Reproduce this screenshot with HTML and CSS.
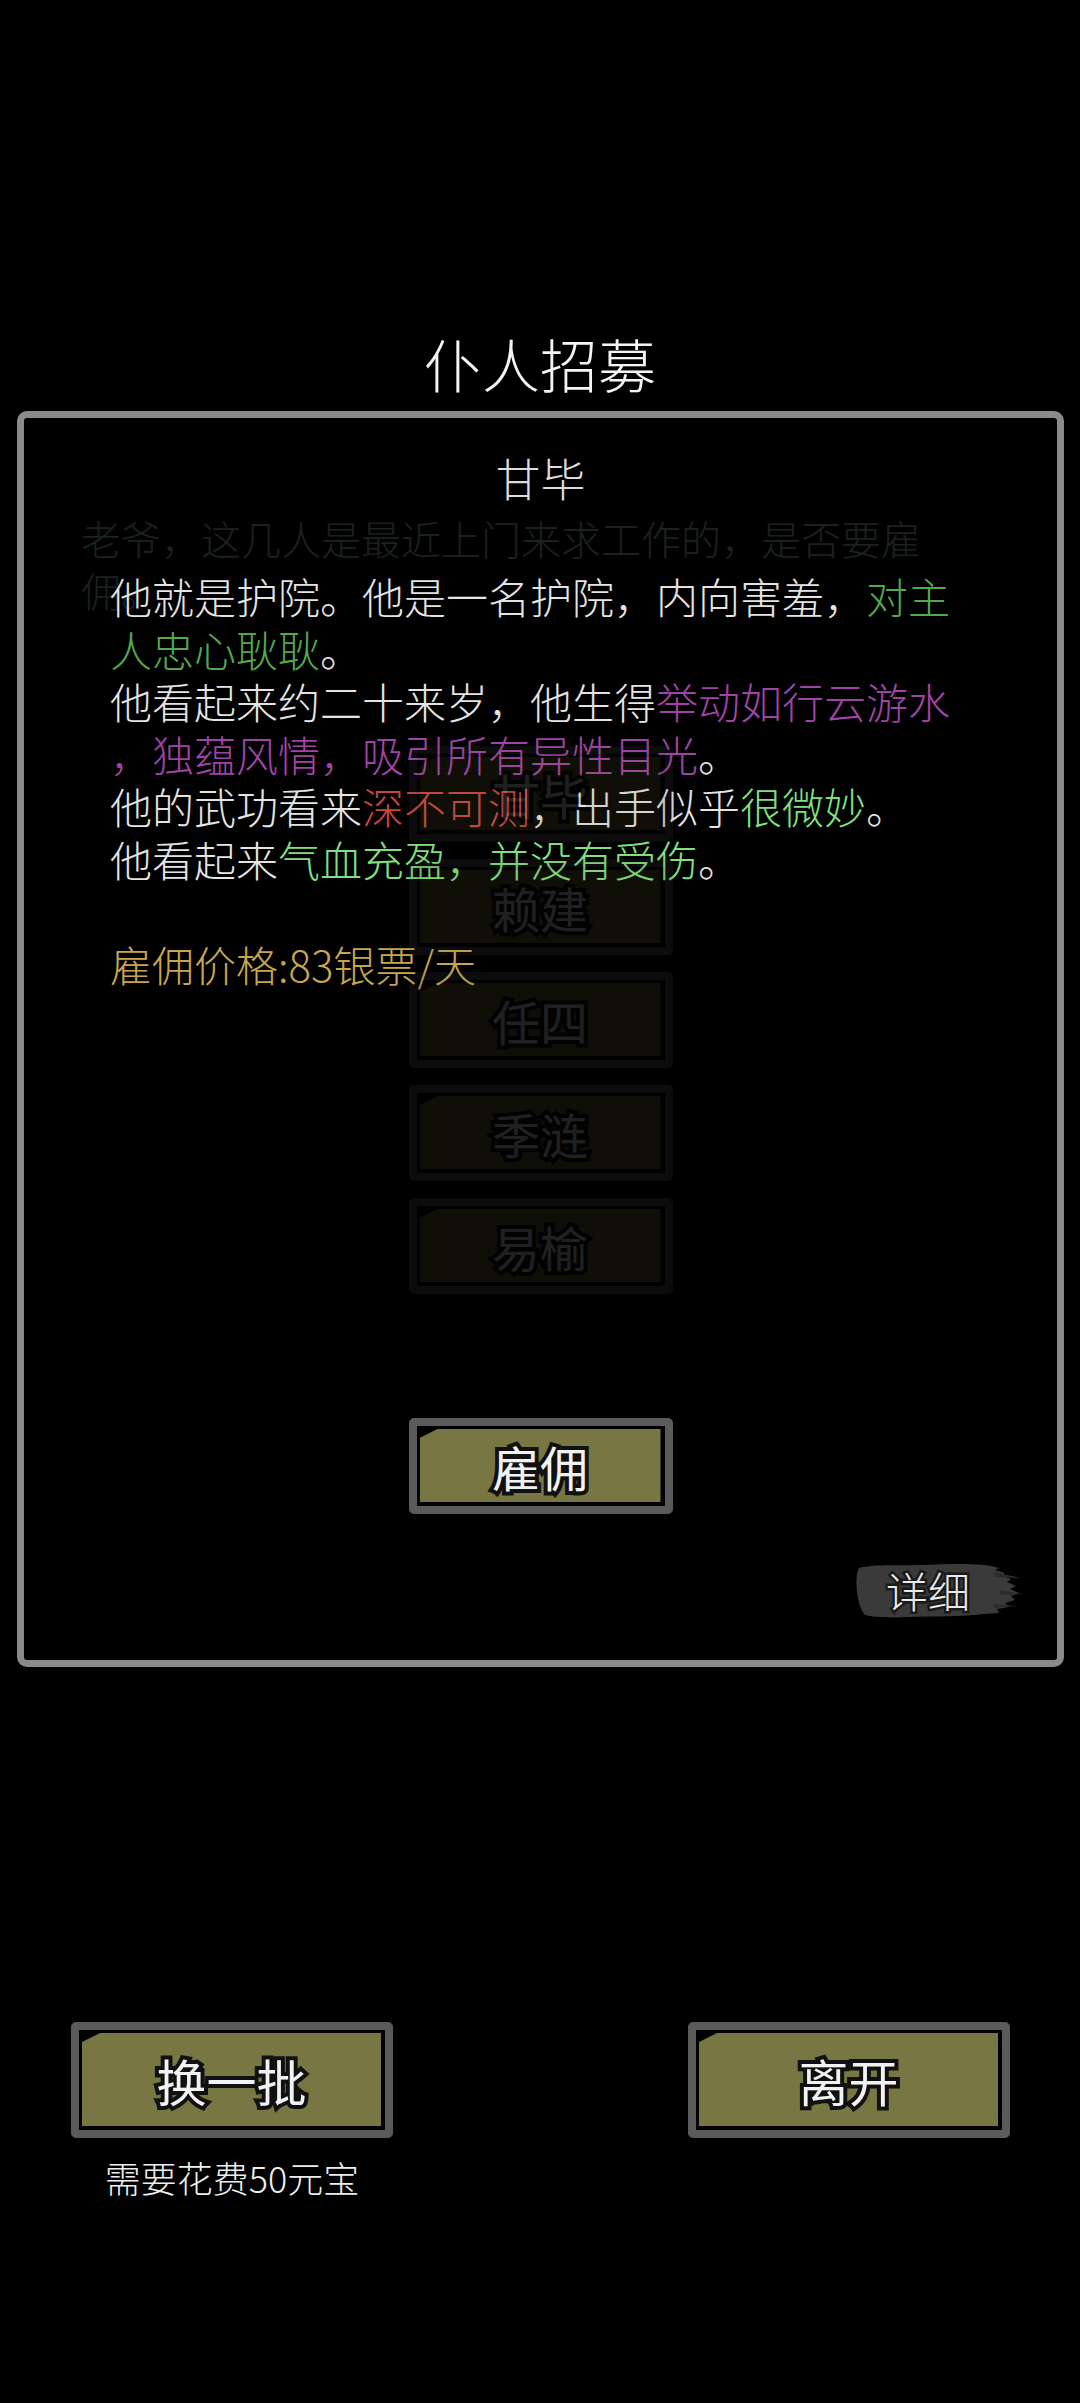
FILE: index.html
```html
<html>
<head>
<meta charset="utf-8">
<title>仆人招募</title>
<link rel="stylesheet" href="styles.css">
</head>
<body>
<div class="title">仆人招募</div>

<div class="panel">
  <!-- back layer: the list of candidates, dimmed -->
  <div class="layer back">
    <div class="prompt">
      <div class="line">老爷，这几人是最近上门来求工作的，是否要雇</div>
      <div class="line">佣。</div>
    </div>
    <div class="namelist">
      <div class="btn small faded"><div class="face">甘毕</div></div>
      <div class="btn small faded"><div class="face">赖建</div></div>
      <div class="btn small faded"><div class="face">任四</div></div>
      <div class="btn small faded"><div class="face">季涟</div></div>
      <div class="btn small faded"><div class="face">易榆</div></div>
    </div>
  </div>

  <!-- front layer: details of the picked one -->
  <div class="layer front">
    <div class="name">甘毕</div>
    <div class="desc">
      <div class="line">他就是护院。他是一名护院，内向害羞，<span class="green">对主</span></div>
      <div class="line"><span class="green">人忠心耿耿</span>。</div>
      <div class="line">他看起来约二十来岁，他生得<span class="purple">举动如行云游水</span></div>
      <div class="line"><span class="purple">，独蕴风情，吸引所有异性目光</span>。</div>
      <div class="line">他的武功看来<span class="red">深不可测</span>，出手似乎<span class="lime">很微妙</span>。</div>
      <div class="line">他看起来<span class="lime">气血充盈，并没有受伤</span>。</div>
      <div class="line">&nbsp;</div>
      <div class="line gold">雇佣价格:83银票/天</div>
    </div>
    <div class="btn small hire"><div class="face">雇佣</div></div>
    <div class="detail">
      <svg class="brush" width="170" height="62" viewBox="0 0 170 62">
        <path fill="#3a3a3a" d="M6 8 C20 4 45 6 70 5 C95 4 120 3 138 6 L146 8 L142 10 L152 13 L149 16 L158 19 L154 22 L163 26 L157 29 L166 33 L158 36 L162 40 L152 43 L156 47 L144 49 L146 53 L130 54 C110 57 80 56 55 57 C35 58 20 57 12 55 C8 50 5 42 4 32 C3 22 3 14 6 8 Z"/>
        <path fill="#2c2c2c" d="M140 12 L168 18 L142 17 Z M146 30 L170 34 L148 35 Z M140 44 L164 46 L142 48 Z"/>
      </svg>
      <div class="detail-text">详细</div>
    </div>
  </div>
</div>

<div class="bottom">
  <div class="col">
    <div class="btn big"><div class="face">换一批</div></div>
    <div class="cost">需要花费50元宝</div>
  </div>
  <div class="col">
    <div class="btn big"><div class="face">离开</div></div>
  </div>
</div>
</body>
</html>
```

FILE: styles.css
```css
body {
	margin: 0;
	background: #000;
	color: #e6e6e6;
	font-family: "Noto Sans CJK SC", "Noto Sans", sans-serif;
	font-weight: 300;
}
.title {
	padding-top: 328px;
	line-height: 70px;
	font-size: 58px;
	text-align: center;
	color: #f4f4f4;
}
.panel {
	margin: 13px 16px 0 17px;
	height: 1256px;
	box-sizing: border-box;
	border: 7px solid #8a8a8a;
	border-radius: 10px;
	display: grid;
}
.layer {
	grid-area: 1 / 1;
	display: flex;
	flex-direction: column;
}
.line {
	white-space: nowrap;
}

/* back layer */
.back {
	padding-top: 94px;
}
.prompt {
	padding-left: 57px;
	font-size: 40px;
	line-height: 52px;
	color: #1b2020;
}
.namelist {
	margin-top: 130px;
	display: flex;
	flex-direction: column;
	align-items: center;
	gap: 17px;
}
.faded {
	opacity: 0.13;
}

/* front layer */
.front {
	padding-top: 30px;
}
.name {
	text-align: center;
	font-size: 45px;
	line-height: 60px;
	color: #dcdcdc;
}
.desc {
	margin-top: 62px;
	padding-left: 86px;
	font-size: 42px;
	line-height: 52.5px;
	color: #e4e4e4;
}
.green { color: #54a84c; }
.purple { color: #a043a6; }
.red { color: #c8453f; }
.lime { color: #80e080; }
.gold { color: #c8a64f; }

.hire {
	align-self: center;
	margin-top: 428px;
}
.detail {
	align-self: flex-end;
	margin: 46px 34px 0 0;
	display: grid;
	width: 170px;
	height: 62px;
}
.brush, .detail-text {
	grid-area: 1 / 1;
}
.detail-text {
	padding-left: 33px;
	font-size: 42px;
	line-height: 60px;
	color: #eaeaea;
	-webkit-text-stroke: 5px #1a1a1a;
	paint-order: stroke fill;
}

/* olive buttons */
.btn {
	box-sizing: border-box;
	border: 8px solid #5b5b5b;
	border-radius: 5px;
	background: #000;
	padding: 3px 4px 4px 3px;
	display: flex;
}
.btn .face {
	flex: 1;
	background: #787642;
	clip-path: polygon(0 9px, 18px 0, 100% 0, 100% 100%, 0 100%);
	display: flex;
	align-items: center;
	justify-content: center;
	font-weight: 400;
	color: #f2f2f2;
	-webkit-text-stroke: 8px #111;
	paint-order: stroke fill;
}
.btn.small {
	width: 264px;
	height: 96px;
}
.btn.small .face {
	font-size: 48px;
}
.btn.big {
	width: 322px;
	height: 116px;
}
.btn.big .face {
	font-size: 50px;
}

/* bottom row */
.bottom {
	margin-top: 355px;
	padding: 0 70px 0 71px;
	display: flex;
	justify-content: space-between;
}
.col {
	display: flex;
	flex-direction: column;
	align-items: center;
}
.cost {
	margin-top: 17px;
	font-size: 36px;
	line-height: 44px;
	color: #eeeeee;
}
```
